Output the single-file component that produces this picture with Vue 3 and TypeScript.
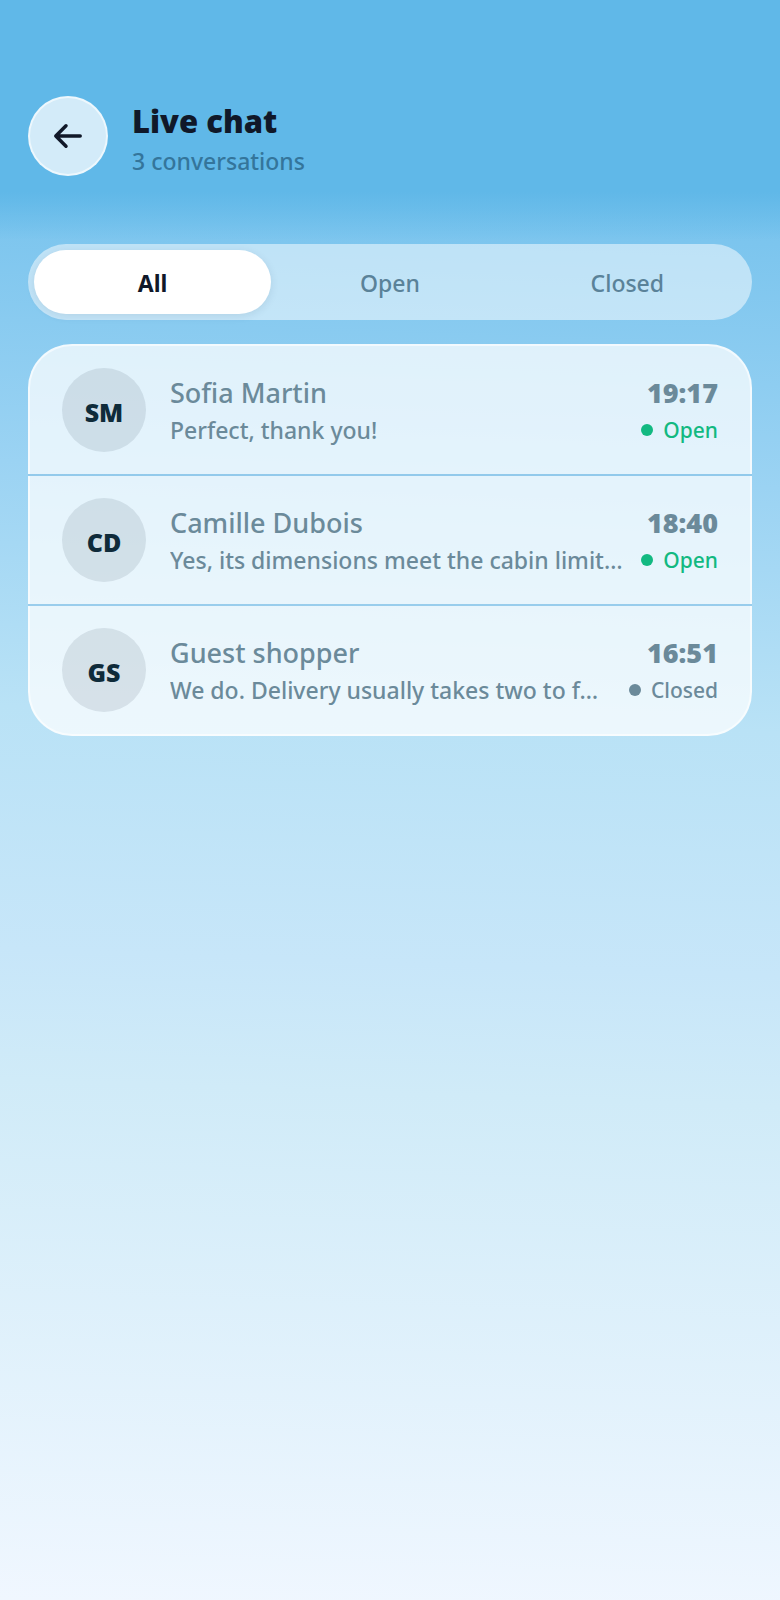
<script setup lang="ts">
import { computed, ref } from 'vue'

type Status = 'Open' | 'Closed'
type Filter = 'All' | Status

interface Conversation {
  id: number
  name: string
  initials: string
  preview: string
  time: string
  status: Status
}

const filters: Filter[] = ['All', 'Open', 'Closed']
const active = ref<Filter>('All')

const conversations: Conversation[] = [
  { id: 1, name: 'Sofia Martin', initials: 'SM', preview: 'Perfect, thank you!', time: '19:17', status: 'Open' },
  { id: 2, name: 'Camille Dubois', initials: 'CD', preview: 'Yes, its dimensions meet the cabin limit…', time: '18:40', status: 'Open' },
  { id: 3, name: 'Guest shopper', initials: 'GS', preview: 'We do. Delivery usually takes two to f…', time: '16:51', status: 'Closed' },
]

const visible = computed(() =>
  conversations.filter((c) => active.value === 'All' || c.status === active.value),
)
</script>

<template>
  <div class="page">
    <header class="header">
      <button class="back" type="button" aria-label="Back">
        <svg viewBox="0 0 32 32" width="32" height="32" aria-hidden="true">
          <path d="M28.200 16H3.800M14 5.800L3.800 16l10.200 10.200" />
        </svg>
      </button>
      <div class="heading">
        <h1 class="title">Live chat</h1>
        <p class="subtitle">{{ conversations.length }} conversations</p>
      </div>
    </header>

    <main class="content">
      <div class="tabs">
        <button
          v-for="f in filters"
          :key="f"
          type="button"
          class="tab"
          :class="{ active: f === active }"
          :aria-pressed="f === active"
          @click="active = f"
        >{{ f }}</button>
      </div>

      <ul class="list">
        <li v-for="c in visible" :key="c.id" class="item">
          <a class="row" href="#">
            <span class="avatar">{{ c.initials }}</span>
            <span class="body">
              <span class="name">{{ c.name }}</span>
              <span class="preview">{{ c.preview }}</span>
            </span>
            <span class="meta">
              <span class="time">{{ c.time }}</span>
              <span class="status" :class="{ open: c.status === 'Open' }">
                <span class="dot"></span>{{ c.status }}
              </span>
            </span>
          </a>
        </li>
      </ul>
    </main>
  </div>
</template>

<style>
body {
  margin: 0;
}
</style>

<style scoped>
.page {
  min-height: 100vh;
  font-family: "Segoe UI", "Noto Sans", "Open Sans", sans-serif;
  background: linear-gradient(182deg, #60b8e8 0%, #7cc5ee 15%, #9bd3f3 30%, #b9e2f6 45%, #c7e6f9 60%, #d0ebf8 68%, #f0f7ff 100%);
}

.header {
  display: flex;
  align-items: center;
  gap: 24px;
  padding: 96px 28px 68px;
  background: linear-gradient(180deg, #60b8e8 0 192px, rgba(96, 184, 232, 0) 240px);
}

.back {
  display: flex;
  align-items: center;
  justify-content: center;
  flex: none;
  width: 80px;
  height: 80px;
  padding: 0;
  border: 2px solid rgba(255, 255, 255, 0.6);
  border-radius: 50%;
  background: rgba(255, 255, 255, 0.72);
}

.back svg {
  fill: none;
  stroke: #101829;
  stroke-width: 3.5;
  stroke-linecap: round;
  stroke-linejoin: round;
}

.title {
  margin: 0;
  font-size: 31px;
  line-height: 50px;
  font-weight: 900;
  color: #101829;
}

.subtitle {
  margin: 0;
  font-size: 23px;
  line-height: 30px;
  font-weight: 500;
  color: #34759b;
}

.content {
  display: flex;
  flex-direction: column;
  gap: 24px;
  padding: 0 28px 28px;
}

.tabs {
  display: flex;
  padding: 6px;
  border-radius: 38px;
  background: rgba(255, 255, 255, 0.5);
}

.tab {
  flex: 1;
  height: 64px;
  padding: 2px 0 0;
  border: 0;
  border-radius: 32px;
  background: none;
  font-family: inherit;
  font-size: 23px;
  font-weight: 500;
  color: #5a8299;
}

.tab.active {
  background: #fff;
  color: #101829;
  font-weight: 700;
  box-shadow: 0 2px 8px rgba(16, 50, 80, 0.1);
}

.list {
  margin: 0;
  padding: 0;
  list-style: none;
}

.item + .item {
  border-top: 2px solid rgba(140, 195, 230, 0.6);
}

.row {
  display: flex;
  align-items: center;
  gap: 16px;
  padding: 22px 32px;
  border: 0 solid rgba(255, 255, 255, 0.6);
  border-width: 0 2px;
  background: rgba(255, 255, 255, 0.73);
  color: #6b8a9a;
  text-decoration: none;
}

.item:first-child .row {
  border-top-width: 2px;
  border-radius: 44px 44px 0 0;
}

.item:last-child .row {
  border-bottom-width: 2px;
  border-radius: 0 0 44px 44px;
}

.item:only-child .row {
  border-radius: 44px;
}

.avatar {
  display: flex;
  align-items: center;
  justify-content: center;
  flex: none;
  box-sizing: border-box;
  width: 84px;
  height: 84px;
  margin-right: 8px;
  padding-top: 4px;
  border-radius: 50%;
  background: rgba(15, 43, 58, 0.1);
  color: #0f2b3a;
  font-size: 25px;
  font-weight: 900;
}

.body {
  flex: 1;
  min-width: 0;
}

.name,
.preview {
  display: block;
  overflow: hidden;
  text-overflow: ellipsis;
  white-space: nowrap;
  font-weight: 500;
}

.name,
.time {
  font-size: 27px;
  line-height: 40px;
}

.preview {
  font-size: 23px;
  line-height: 34px;
}

.meta {
  display: flex;
  flex-direction: column;
  align-items: flex-end;
  flex: none;
}

.time {
  font-weight: 900;
}

.status {
  display: flex;
  align-items: center;
  gap: 10px;
  font-size: 21px;
  line-height: 34px;
  font-weight: 500;
}

.status.open {
  color: #12b981;
}

.dot {
  width: 12px;
  height: 12px;
  border-radius: 50%;
  background: currentColor;
}
</style>
